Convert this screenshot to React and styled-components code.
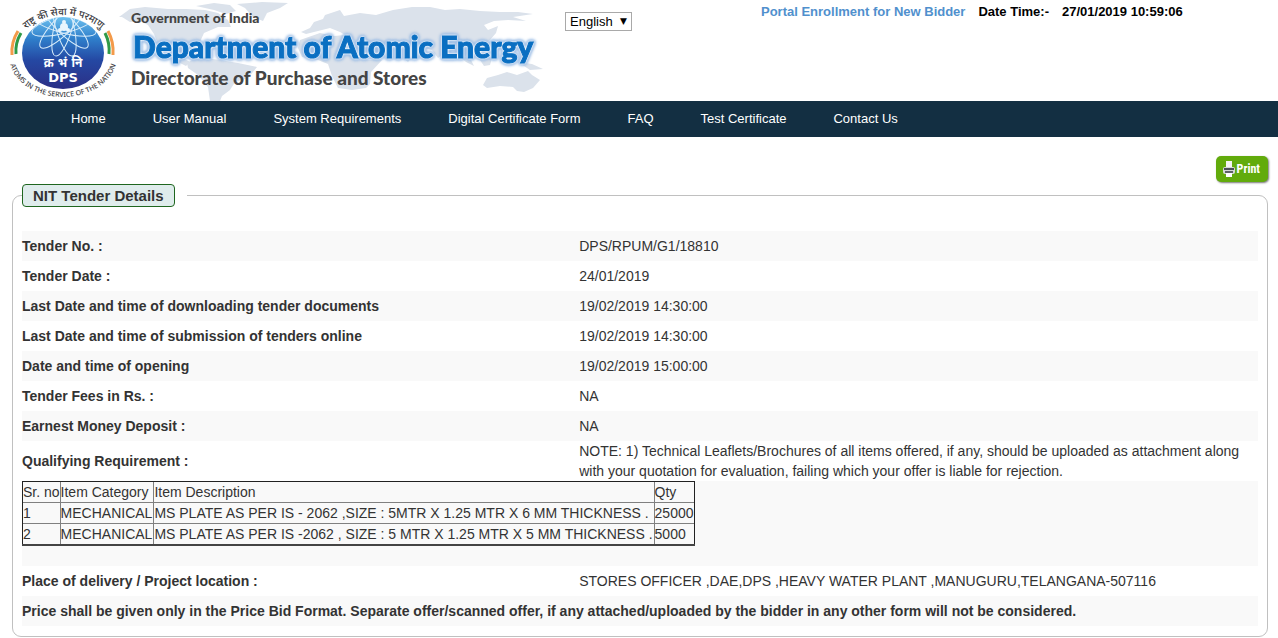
import { useState } from 'react';
import styled, { createGlobalStyle } from 'styled-components';

const menu = [
  'Home',
  'User Manual',
  'System Requirements',
  'Digital Certificate Form',
  'FAQ',
  'Test Certificate',
  'Contact Us',
];

const details = [
  { label: 'Tender No. :', value: 'DPS/RPUM/G1/18810' },
  { label: 'Tender Date :', value: '24/01/2019' },
  { label: 'Last Date and time of downloading tender documents', value: '19/02/2019 14:30:00' },
  { label: 'Last Date and time of submission of tenders online', value: '19/02/2019 14:30:00' },
  { label: 'Date and time of opening', value: '19/02/2019 15:00:00' },
  { label: 'Tender Fees in Rs. :', value: 'NA' },
  { label: 'Earnest Money Deposit :', value: 'NA' },
];

const items = [
  { category: 'MECHANICAL', description: 'MS PLATE AS PER IS - 2062 ,SIZE : 5MTR X 1.25 MTR X 6 MM THICKNESS .', qty: 25000 },
  { category: 'MECHANICAL', description: 'MS PLATE AS PER IS -2062 , SIZE : 5 MTR X 1.25 MTR X 5 MM THICKNESS .', qty: 5000 },
];

const Banner = () => {
  return (
    <BannerSvg viewBox="0 0 552 101" role="img" aria-label="Department of Atomic Energy">
      <defs>
        <linearGradient id="globe" x1="0" y1="0" x2="0" y2="1">
          <stop offset="0" stopColor="#6cc0ee" />
          <stop offset="0.3" stopColor="#2f7fcb" />
          <stop offset="0.6" stopColor="#2548a3" />
          <stop offset="1" stopColor="#2b2f86" />
        </linearGradient>
        <clipPath id="globeClip">
          <ellipse cx="63" cy="53" rx="41" ry="36" />
        </clipPath>
        <path id="topArc" d="M22 33 A 57 57 0 0 1 105 33" />
        <path id="bottomArc" d="M9 56 A 54 41 0 0 0 117 56" />
      </defs>

      {/* world map */}
      <g fill="#dbe2eb">
        <path d="M119 17 L130 9 L145 7 L168 9 L186 9 L205 10 L218 13 L228 20 L231 27 L218 27 L204 33 L199 44 L194 50 L196 56 L186 52 L178 55 L190 62 L186 66 L174 60 L166 54 L158 44 L154 34 L148 25 L140 21 L130 22 L122 17 Z" />
        <path d="M196 6 L214 3 L230 5 L236 11 L226 14 L214 10 Z" />
        <path d="M237 4 L262 2 L288 3 L280 8 L267 13 L263 21 L253 17 L245 8 Z" />
        <path d="M187 63 L197 57 L220 60 L238 63 L257 67 L248 78 L235 82 L230 90 L222 96 L220 101 L210 101 L208 87 L198 75 L188 68 Z" />
        <path d="M300 40 L320 33 L334 36 L345 35 L352 46 L360 60 L382 60 L371 72 L370 84 L366 88 L352 90 L338 88 L332 76 L328 64 L318 60 L302 57 L298 48 Z" />
        <path d="M301 32 L310 28 L314 22 L323 19 L325 15 L340 10 L344 16 L360 13 L376 15 L393 10 L412 7 L430 7 L445 10 L460 9 L480 11 L500 12 L518 12 L533 14 L513 17 L526 21 L508 20 L494 21 L484 25 L488 30 L498 26 L496 33 L490 40 L482 46 L486 54 L478 58 L470 52 L462 58 L456 52 L448 50 L438 58 L432 50 L424 48 L414 54 L408 62 L398 52 L386 46 L378 54 L364 54 L354 40 L340 32 L330 28 L318 31 L306 34 Z" />
        <path d="M458 55 L466 62 L474 66 L470 58 Z M480 60 L492 58 L490 65 L484 66 Z M518 62 L532 64 L543 69 L530 70 Z" />
        <path d="M483 85 L487 78 L498 75 L507 72 L517 75 L528 71 L532 75 L540 80 L533 88 L524 92 L517 91 L513 87 L500 86 L487 88 Z" />
      </g>

      {/* emblem */}
      <ellipse cx="63" cy="53" rx="41" ry="36" fill="url(#globe)" />
      <g clipPath="url(#globeClip)" fill="none" stroke="#d8ecfa" strokeWidth="1">
        {[15, 45, 75, 105, 135, 165].map((angle) => (
          <ellipse key={angle} cx="64" cy="24" rx="33" ry="9" transform={`rotate(${angle} 64 24)`} />
        ))}
      </g>
      <g fill="#e8f5fd">
        <circle cx="64" cy="27" r="4" />
        <circle cx="60" cy="30" r="2" />
        <circle cx="68" cy="30" r="2" />
        <circle cx="64" cy="22" r="2" />
      </g>
      <g fill="none" strokeWidth="3">
        <path stroke="#f39a4a" d="M18 31 Q11 42 12 55" />
        <path stroke="#2f9a48" d="M21 33 Q15 43 16 54" />
        <path stroke="#2f9a48" d="M105 33 Q110 43 109 54" />
        <path stroke="#f39a4a" d="M108 31 Q114 42 113 55" />
      </g>
      <EmblemText fontSize="10">
        <textPath href="#topArc" startOffset="50%" textAnchor="middle">राष्ट्र की सेवा में परमाणु</textPath>
      </EmblemText>
      <EmblemText fontSize="7">
        <textPath href="#bottomArc" startOffset="50%" textAnchor="middle">ATOMS IN THE SERVICE OF THE NATION</textPath>
      </EmblemText>
      <EmblemName x="63" y="67" fontSize="12" textAnchor="middle">क्र भं नि</EmblemName>
      <EmblemName x="63" y="82" fontSize="13" textAnchor="middle">DPS</EmblemName>

      <BannerText x="131" y="23" fontSize="14">Government of India</BannerText>
      <BannerTitle x="133" y="58" fontSize="30">Department of Atomic Energy</BannerTitle>
      <BannerText x="131" y="85" fontSize="19">Directorate of Purchase and Stores</BannerText>
    </BannerSvg>
  );
};

const PrinterIcon = () => {
  return (
    <svg width="12" height="16" viewBox="0 0 12 16" aria-hidden="true">
      <rect x="3" y="0" width="6" height="7" fill="#f4f4f4" />
      <rect x="0" y="6" width="12" height="7" rx="2" fill="#d5d7d8" />
      <rect x="1" y="7" width="10" height="2" fill="#4b4f57" />
      <rect x="2" y="10" width="8" height="2" fill="#5d6168" />
      <rect x="3" y="12" width="6" height="4" fill="#ffffff" />
    </svg>
  );
};

export default function App() {
  const [language, setLanguage] = useState('English');

  return (
    <>
      <GlobalStyle />
      <Header>
        <Banner />
        <LanguageBox>
          <LanguageSelect aria-label="Language" value={language} onChange={(e) => setLanguage(e.target.value)}>
            <option>English</option>
            <option>Hindi</option>
          </LanguageSelect>
          <Arrow aria-hidden="true">▼</Arrow>
        </LanguageBox>
        <HeaderInfo>
          <EnrollLink href="#enroll">Portal Enrollment for New Bidder</EnrollLink>
          <span>Date Time:-</span>
          <span>27/01/2019 10:59:06</span>
        </HeaderInfo>
      </Header>

      <Nav>
        {menu.map((item) => (
          <NavLink key={item} href="#">{item}</NavLink>
        ))}
      </Nav>

      <Main>
        <Toolbar>
          <PrintButton type="button" onClick={() => window.print()}>
            <PrinterIcon />
            Print
          </PrintButton>
        </Toolbar>
        <Panel>
          <Legend>
            <LegendText>NIT Tender Details</LegendText>
          </Legend>
          <DetailsTable>
            <tbody>
              {details.map((item) => (
                <Row key={item.label}>
                  <Label scope="row">{item.label}</Label>
                  <Value>{item.value}</Value>
                </Row>
              ))}
              <Row>
                <Label scope="row">Qualifying Requirement :</Label>
                <Value $tight>
                  NOTE: 1) Technical Leaflets/Brochures of all items offered, if any, should be uploaded as attachment
                  along with your quotation for evaluation, failing which your offer is liable for rejection.
                </Value>
              </Row>
              <Row>
                <ItemsCell colSpan={2}>
                  <ItemsTable>
                    <thead>
                      <tr>
                        <th>Sr. no</th>
                        <th>Item Category</th>
                        <th>Item Description</th>
                        <th>Qty</th>
                      </tr>
                    </thead>
                    <tbody>
                      {items.map((item, index) => (
                        <tr key={index}>
                          <td>{index + 1}</td>
                          <td>{item.category}</td>
                          <td>{item.description}</td>
                          <td>{item.qty}</td>
                        </tr>
                      ))}
                    </tbody>
                  </ItemsTable>
                </ItemsCell>
              </Row>
              <Row>
                <Label scope="row">Place of delivery / Project location :</Label>
                <Value>STORES OFFICER ,DAE,DPS ,HEAVY WATER PLANT ,MANUGURU,TELANGANA-507116</Value>
              </Row>
              <Row>
                <Label as="td" colSpan={2}>
                  Price shall be given only in the Price Bid Format. Separate offer/scanned offer, if any
                  attached/uploaded by the bidder in any other form will not be considered.
                </Label>
              </Row>
            </tbody>
          </DetailsTable>
        </Panel>
      </Main>
    </>
  );
}

const GlobalStyle = createGlobalStyle`
  * {
    box-sizing: border-box;
  }
  body {
    margin: 0;
    background-color: #ffffff;
    color: #333333;
    font-family: "Liberation Sans", Arial, sans-serif;
    font-size: 14px;
    line-height: 20px;
  }
`;

const Header = styled.header`
  display: flex;
  align-items: flex-start;
`;

const BannerSvg = styled.svg`
  display: block;
  flex: none;
  width: 552px;
  height: 101px;
`;

const EmblemText = styled.text`
  font-family: "Noto Sans", "Liberation Sans", sans-serif;
  font-weight: 500;
  fill: #3c3c42;
`;

const EmblemName = styled.text`
  font-family: "DejaVu Sans", "Noto Sans", sans-serif;
  font-weight: 700;
  fill: #ffffff;
`;

const BannerText = styled.text`
  font-family: Lato, sans-serif;
  font-weight: 900;
  fill: #444444;
`;

const BannerTitle = styled.text`
  font-family: Lato, sans-serif;
  font-weight: 900;
  fill: #0a6fc2;
  stroke: #0a6fc2;
  stroke-width: 1px;
  filter: drop-shadow(0 0 1px #ffffff) drop-shadow(0 0 1px #ffffff) drop-shadow(0 0 1px #5a93d6)
    drop-shadow(0 0 1px #8fb4e2);
`;

const LanguageBox = styled.div`
  position: relative;
  margin: 12px 0 0 13px;
  width: 67px;
  height: 19px;
`;

const LanguageSelect = styled.select`
  display: block;
  appearance: none;
  width: 100%;
  height: 100%;
  padding: 0 4px;
  border: 1px solid #a9a9a9;
  border-radius: 0;
  background-color: #ffffff;
  color: #000000;
  font-family: inherit;
  font-size: 13px;
`;

const Arrow = styled.span`
  position: absolute;
  top: 0;
  right: 5px;
  color: #000000;
  font-family: "DejaVu Sans", sans-serif;
  font-size: 9px;
  line-height: 18px;
  pointer-events: none;
`;

const HeaderInfo = styled.div`
  display: flex;
  flex: 1;
  gap: 13px;
  margin-left: 129px;
  padding-top: 2px;
  color: #000000;
  font-size: 13px;
  font-weight: 700;
  white-space: nowrap;
`;

const EnrollLink = styled.a`
  color: #5090cd;
  text-decoration: none;
`;

const Nav = styled.nav`
  display: flex;
  gap: 47px;
  padding: 8px 71px;
  background-color: #132f42;
`;

const NavLink = styled.a`
  color: #ffffff;
  font-size: 13px;
  text-decoration: none;
  white-space: nowrap;
`;

const Main = styled.main`
  padding: 19px 10px 0 12px;
`;

const Toolbar = styled.div`
  display: flex;
  justify-content: flex-end;
  margin-bottom: 2px;
`;

const PrintButton = styled.button`
  display: flex;
  align-items: center;
  gap: 2px;
  height: 26px;
  padding: 0 8px 0 7px;
  border: none;
  border-radius: 5px;
  background-color: #62ab0c;
  box-shadow: 1px 1px 2px #777777;
  color: #ffffff;
  font-family: "Liberation Sans Narrow", "Roboto Condensed", sans-serif;
  font-size: 12px;
  font-weight: 700;
  cursor: pointer;
`;

const Panel = styled.fieldset`
  min-width: 0;
  margin: 0;
  padding: 24px 9px 10px;
  border: 1px solid #c0c0c0;
  border-radius: 9px;
`;

const Legend = styled.legend`
  padding: 0 12px 0 0;
`;

const LegendText = styled.span`
  display: block;
  padding: 1px 10px 0;
  border: 1px solid #1f661f;
  border-radius: 4px;
  background-color: #dfecec;
  font-size: 15px;
  font-weight: 700;
  line-height: 20px;
`;

const DetailsTable = styled.table`
  width: 100%;
  border-collapse: collapse;
`;

const Row = styled.tr`
  &:nth-child(odd) {
    background-color: #f9f9f9;
  }
`;

const Label = styled.th`
  width: 45%;
  padding: 5px 0;
  font-weight: 700;
  text-align: left;
`;

const Value = styled.td`
  padding: ${props => (props.$tight ? '0 0 0 1px' : '5px 0 5px 1px')};
`;

const ItemsCell = styled.td`
  padding: 0 0 20px;
`;

const ItemsTable = styled.table`
  border: 1px double #222222;
  border-bottom: 2px solid #444444;
  border-collapse: collapse;
  white-space: nowrap;
  th, td {
    padding: 0;
    border: 1px solid #808080;
    font-weight: 400;
    text-align: left;
  }
  td:nth-child(2), td:nth-child(3) {
    padding-right: 1px;
  }
`;
